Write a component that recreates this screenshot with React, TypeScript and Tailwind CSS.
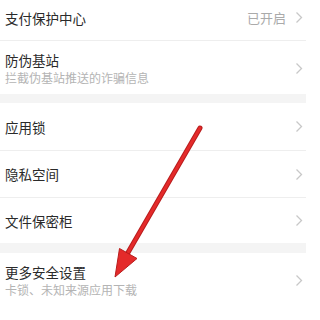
import React from "react";

const Chevron = () => (
  <svg width="8" height="13" viewBox="0 0 8 13" className="shrink-0">
    <path d="M1.5 1.5l5 5-5 5" fill="none" stroke="#c8c8c8" strokeWidth="1.3" />
  </svg>
);

type RowProps = {
  title: string;
  sub?: string;
  right?: string;
  className?: string;
};

const Row = ({ title, sub, right, className = "" }: RowProps) => (
  <div className={"flex items-center justify-between pl-[5px] pr-[3px] bg-white " + className}>
    <div className="flex flex-col">
      <span className="text-[13.5px] leading-[18px] text-[#2a2a2a]">{title}</span>
      {sub && <span className="text-[12px] leading-[16px] text-[#b4b4b4] mt-[1px]">{sub}</span>}
    </div>
    <div className="flex items-center gap-[9px]">
      {right && <span className="text-[13px] text-[#aaa]">{right}</span>}
      <Chevron />
    </div>
  </div>
);

const Divider = () => <div className="h-px bg-[#eeeeee]" />;
const Gap = ({ h }: { h: string }) => <div className={"bg-[#f4f4f4] " + h} />;

export default function App() {
  return (
    <div
      className="relative w-[306px] h-[320px] overflow-hidden bg-white"
      style={{ fontFamily: '"Noto Sans CJK SC", "Noto Sans", sans-serif' }}
    >
      <Row title="支付保护中心" right="已开启" className="h-[40px] pb-[5px]" />
      <Divider />
      <Row title="防伪基站" sub="拦截伪基站推送的诈骗信息" className="h-[53px] pt-[1px]" />
      <Gap h="h-[9px]" />
      <Row title="应用锁" className="h-[47px]" />
      <Divider />
      <Row title="隐私空间" className="h-[46px]" />
      <Divider />
      <Row title="文件保密柜" className="h-[45px]" />
      <Gap h="h-[10px]" />
      <Row title="更多安全设置" sub="卡锁、未知来源应用下载" className="h-[56px] pb-[1px]" />

      {/* red annotation arrow */}
      <svg className="absolute inset-0 pointer-events-none" width="306" height="320" viewBox="0 0 306 320">
        <line x1="200" y1="128" x2="126" y2="256" stroke="#b81c1c" strokeWidth="5" strokeLinecap="round" />
        <line x1="200" y1="128" x2="126" y2="256" stroke="#e42a2a" strokeWidth="3" strokeLinecap="round" />
        <polygon points="115,277 119.5,248.5 137,258.5" fill="#e42a2a" stroke="#b81c1c" strokeWidth="1" strokeLinejoin="round" />
      </svg>
    </div>
  );
}
